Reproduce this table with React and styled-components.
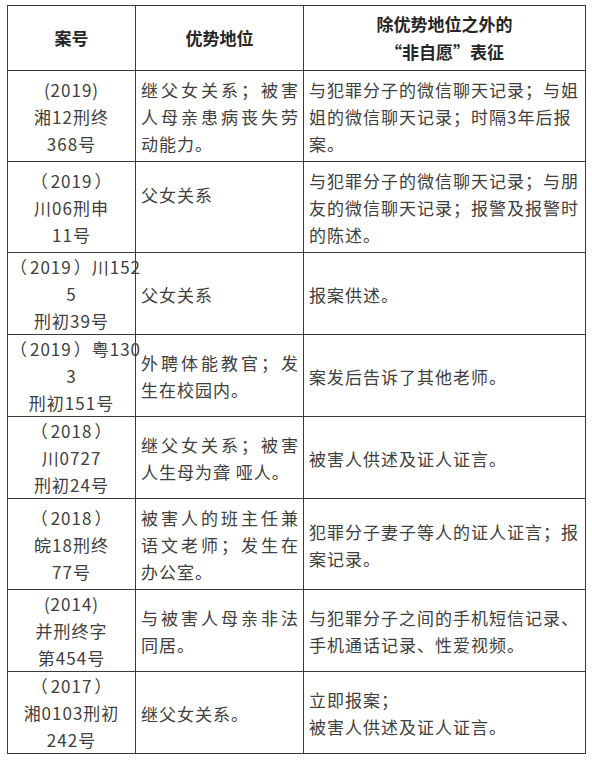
import React from "react";
import styled, { createGlobalStyle } from "styled-components";

const GlobalStyle = createGlobalStyle`
  body {
    margin: 0;
    background: #ffffff;
    font-family: "Noto Sans CJK SC", "Noto Sans", sans-serif;
  }
`;

const Page = styled.div`
  padding: 5px 0 0 7px;
`;

const Table = styled.table`
  width: 578px;
  table-layout: fixed;
  border-collapse: collapse;
  color: #404040;
  font-size: 17px;
  letter-spacing: 1px;
  line-height: 27px;
`;

const HeadCell = styled.th`
  border: 1px solid #3a3a3a;
  padding: 4px 4px;
  height: 55px;
  font-weight: bold;
  color: #262626;
  letter-spacing: 0;
  line-height: 28px;
  text-align: center;
  vertical-align: middle;
`;

const CaseCell = styled.td`
  border: 1px solid #3a3a3a;
  padding: 0 2px;
  text-align: center;
  vertical-align: middle;
  white-space: nowrap;
`;

const TextCell = styled.td`
  border: 1px solid #3a3a3a;
  padding: 5px 4px 4px 5px;
  text-align: ${(p) => (p.$justify ? "justify" : "left")};
  vertical-align: middle;
`;

// full-width brackets sit tight against the digits in this font; open them up
const Paren = styled.span`
  margin: ${(p) => (p.$open ? "0 2px 0 0" : "0 0 0 2px")};
`;

const rows = [
  {
    no: ["(2019)", "湘12刑终", "368号"],
    status: "继父女关系；被害人母亲患病丧失劳动能力。",
    sign: ["与犯罪分子的微信聊天记录；与姐姐的微信聊天记录；时隔3年后报案。"],
  },
  {
    no: ["（2019）", "川06刑申", "11号"],
    status: "父女关系",
    padLine: true,
    sign: ["与犯罪分子的微信聊天记录；与朋友的微信聊天记录；报警及报警时的陈述。"],
  },
  {
    no: ["（2019）川152", "5", "刑初39号"],
    status: "父女关系",
    sign: ["报案供述。"],
  },
  {
    no: ["（2019）粤130", "3", "刑初151号"],
    status: "外聘体能教官；发生在校园内。",
    sign: ["案发后告诉了其他老师。"],
  },
  {
    no: ["（2018）", "川0727", "刑初24号"],
    status: "继父女关系；被害人生母为聋 哑人。",
    sign: ["被害人供述及证人证言。"],
  },
  {
    no: ["（2018）", "皖18刑终", "77号"],
    status: "被害人的班主任兼语文老师；发生在办公室。",
    sign: ["犯罪分子妻子等人的证人证言；报案记录。"],
  },
  {
    no: ["(2014)", "并刑终字", "第454号"],
    status: "与被害人母亲非法同居。",
    sign: ["与犯罪分子之间的手机短信记录、手机通话记录、性爱视频。"],
  },
  {
    no: ["（2017）", "湘0103刑初", "242号"],
    status: "继父女关系。",
    sign: ["立即报案；", "被害人供述及证人证言。"],
  },
];

const CaseLine = ({ text }) =>
  text.split(/([（）])/).map((part, i) =>
    part === "（" || part === "）" ? (
      <Paren key={i} $open={part === "（"}>
        {part}
      </Paren>
    ) : (
      part
    )
  );

const Lines = ({ items, render }) =>
  items.map((line, i) => (
    <React.Fragment key={i}>
      {i > 0 && <br />}
      {render ? render(line) : line}
    </React.Fragment>
  ));

export default function App() {
  return (
    <Page>
      <GlobalStyle />
      <Table>
        <colgroup>
          <col style={{ width: 128 }} />
          <col style={{ width: 168 }} />
          <col style={{ width: 282 }} />
        </colgroup>
        <thead>
          <tr>
            <HeadCell>案号</HeadCell>
            <HeadCell>优势地位</HeadCell>
            <HeadCell>
              除优势地位之外的
              <br />
              “非自愿”表征
            </HeadCell>
          </tr>
        </thead>
        <tbody>
          {rows.map((r, i) => (
            <tr key={i}>
              <CaseCell>
                <Lines items={r.no} render={(t) => <CaseLine text={t} />} />
              </CaseCell>
              <TextCell $justify>
                {r.status}
                {r.padLine && (
                  <>
                    <br />
                    {"\u00a0"}
                  </>
                )}
              </TextCell>
              <TextCell>
                <Lines items={r.sign} />
              </TextCell>
            </tr>
          ))}
        </tbody>
      </Table>
    </Page>
  );
}
